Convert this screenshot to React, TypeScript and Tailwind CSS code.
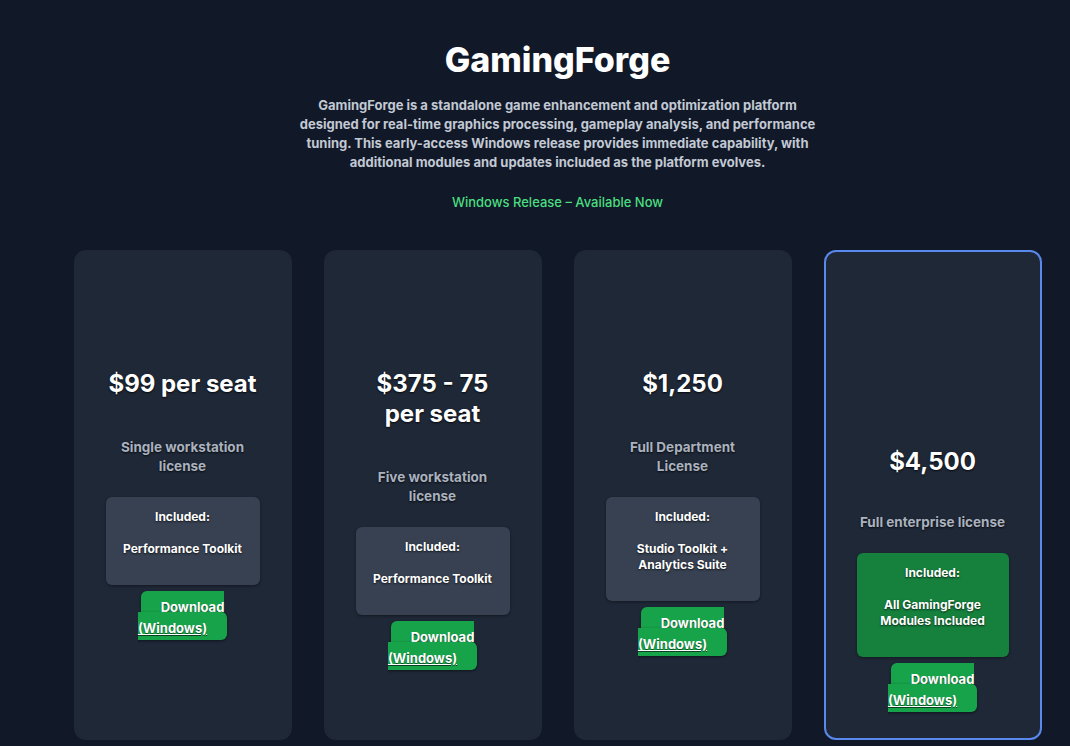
import React from "react";

type Plan = {
  price: React.ReactNode;
  subtitle: string;
  items: string[];
  featured?: boolean;
};

const plans: Plan[] = [
  { price: "$99 per seat", subtitle: "Single workstation license", items: ["Performance Toolkit"] },
  { price: "$375 - 75 per seat", subtitle: "Five workstation license", items: ["Performance Toolkit"] },
  { price: "$1,250", subtitle: "Full Department License", items: ["Studio Toolkit + Analytics Suite"] },
  { price: "$4,500", subtitle: "Full enterprise license", items: ["All GamingForge Modules Included"], featured: true },
];

function Card({ plan }: { plan: Plan }) {
  return (
    <div
      className={
        plan.featured
          ? "flex flex-col items-center rounded-xl border-2 border-[#5a89ee] bg-[#1f2837] px-[31px] pt-[30px] pb-[27px] text-center"
          : "flex flex-col items-center rounded-xl bg-[#1f2837] px-8 pt-8 pb-8 text-center"
      }
    >
      <div className={plan.featured ? "h-[165px] w-full" : "h-[87px] w-full"} />
      <div className="text-[24px] font-bold leading-[30px] text-white [text-shadow:0_1px_2px_rgba(0,0,0,0.8)]">
        {plan.price}
      </div>
      <div
        className={
          plan.featured
            ? "mt-[36px] mb-[21px] text-[13.5px] font-bold leading-[19px] text-[#aab2bf] [text-shadow:0_1px_2px_rgba(0,0,0,0.8)]"
            : "mt-[39px] mb-[21px] text-[13.5px] font-bold leading-[19px] text-[#aab2bf] [text-shadow:0_1px_2px_rgba(0,0,0,0.8)]"
        }
      >
        {plan.subtitle}
      </div>
      <div
        className={
          plan.featured
            ? "w-full rounded-md bg-[#16803d] p-3 text-[12px] font-bold leading-4 text-white shadow-[0_1px_3px_rgba(0,0,0,0.4)] [text-shadow:0_1px_2px_rgba(0,0,0,0.7)]"
            : "w-full rounded-md bg-[#374151] p-3 text-[12px] font-bold leading-4 text-white shadow-[0_1px_3px_rgba(0,0,0,0.4)] [text-shadow:0_1px_2px_rgba(0,0,0,0.7)]"
        }
      >
        <p>Included:</p>
        <ul className="my-4">
          {plan.items.map((it) => (
            <li key={it}>{it}</li>
          ))}
        </ul>
      </div>
      <div className="mt-3 w-full text-center text-[13px] font-bold leading-[21px]">
        <a
          href="#"
          className="rounded-md bg-[#17a34a] px-5 pt-2 pb-1 text-white underline shadow-[0_1px_3px_rgba(0,0,0,0.5)] [text-shadow:0_1px_1px_rgba(0,0,0,0.6)]"
        >
          Download (Windows)
        </a>
      </div>
    </div>
  );
}

export default function App() {
  return (
    <div className="min-h-screen bg-[#111827] pl-[45px] pb-10 font-['Inter','Liberation_Sans',sans-serif]">
      <div className="mx-auto max-w-[968px] pt-10">
        <h1 className="text-center text-[34px] font-extrabold leading-10 text-white">GamingForge</h1>
        <p className="mt-4 text-center text-[13px] font-bold leading-[19px] text-[#c2c9d4]">
          GamingForge is a standalone game enhancement and optimization platform
          <br />
          designed for real-time graphics processing, gameplay analysis, and performance
          <br />
          tuning. This early-access Windows release provides immediate capability, with
          <br />
          additional modules and updates included as the platform evolves.
        </p>
        <p className="mt-5 text-center text-[13px] font-medium leading-5 text-[#4ade80]">
          Windows Release – Available Now
        </p>
        <div className="mt-[38px] grid grid-cols-4 gap-8">
          {plans.map((p, i) => (
            <Card key={i} plan={p} />
          ))}
        </div>
      </div>
    </div>
  );
}
